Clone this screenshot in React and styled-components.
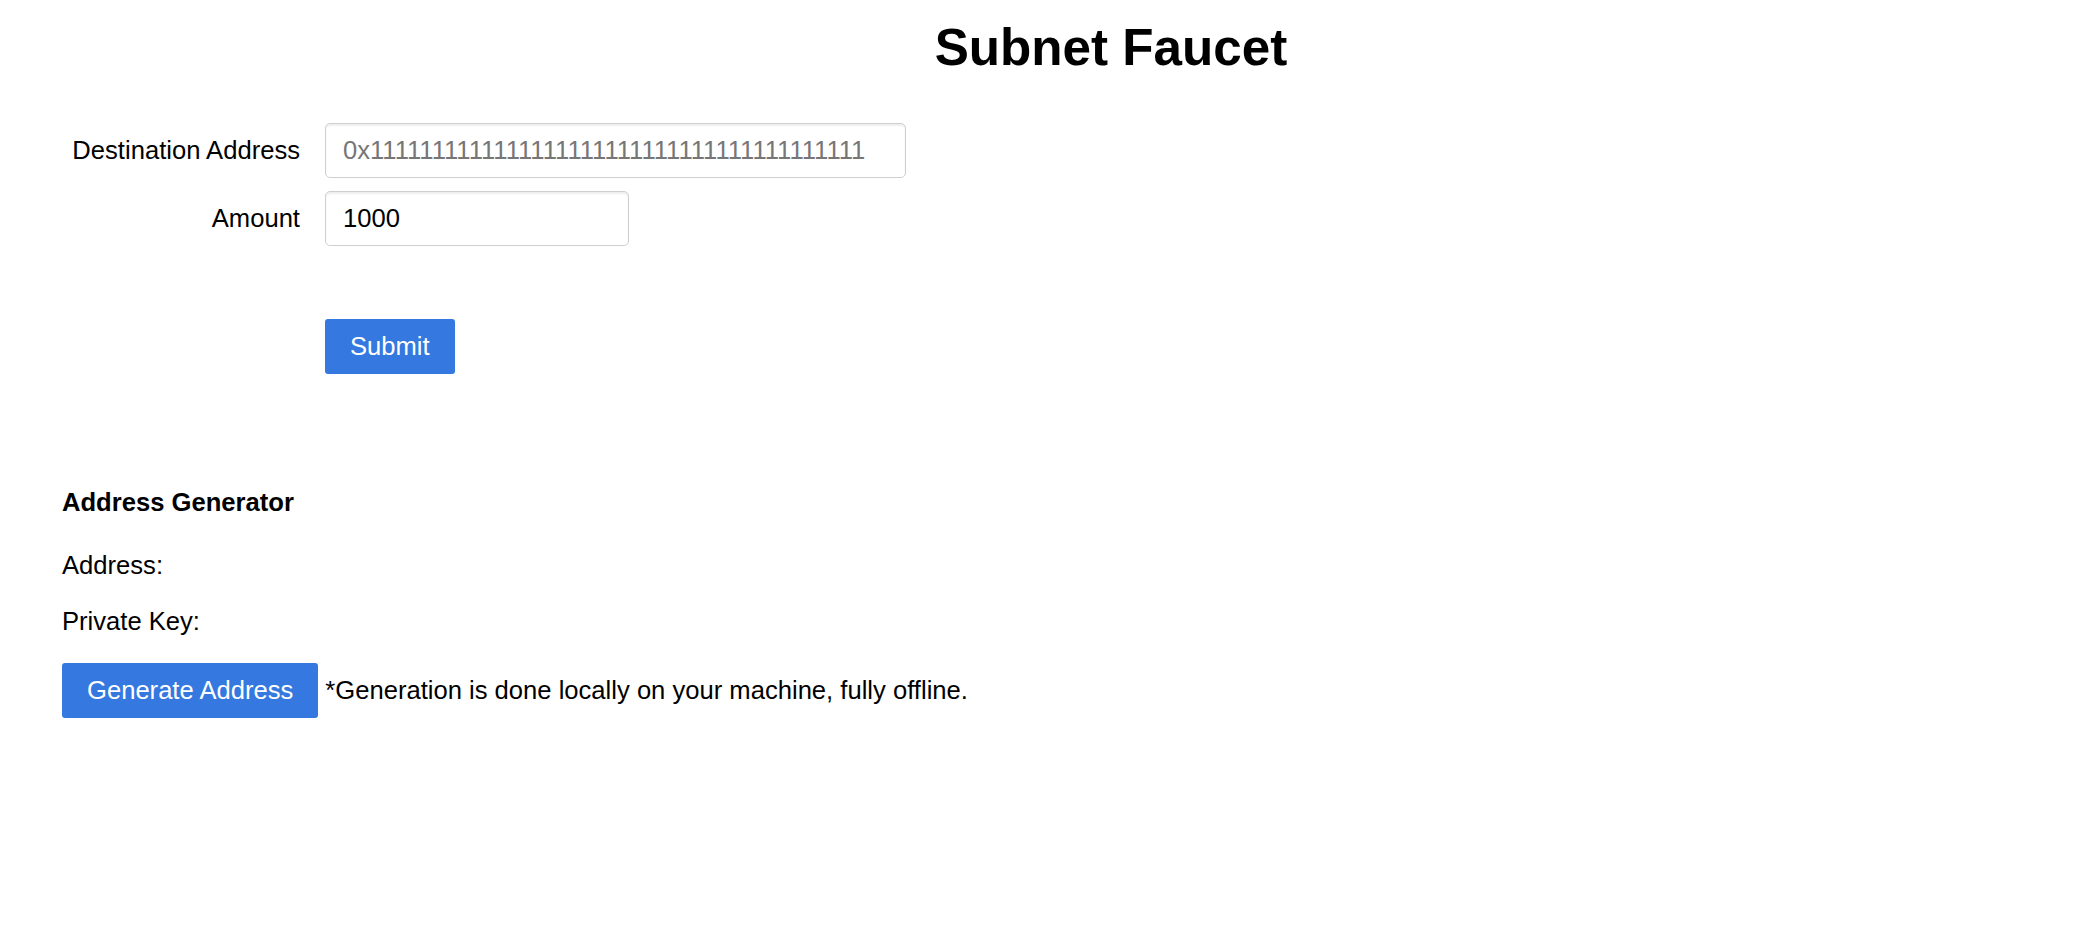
import React, { useState } from 'react';
import styled, { createGlobalStyle } from 'styled-components';

// Base page styles
const GlobalStyle = createGlobalStyle`
  body {
    margin: 0;
    background: #ffffff;
    color: #000000;
    font-family: "Liberation Sans", Arial, Helvetica, sans-serif;
    font-size: 25.6px;
  }
`;

// Page wrapper
const Page = styled.main`
  padding: 0 62px 60px 62px;
`;

// Big centered title
const Title = styled.h1`
  margin: 0;
  padding: 19px 0 0 122px;
  font-size: 51.2px;
  font-weight: 700;
  line-height: 1.15;
  text-align: center;
`;

// Label / field grid for the faucet form
const FormGrid = styled.form`
  display: grid;
  grid-template-columns: 238px auto;
  column-gap: 25px;
  row-gap: 13px;
  align-items: center;
  justify-items: start;
  margin-top: 45px;
`;

const FieldLabel = styled.label`
  justify-self: end;
  font-size: 25.6px;
  line-height: 1.15;
`;

const TextInput = styled.input`
  box-sizing: border-box;
  width: ${props => props.$width}px;
  height: 55px;
  padding: 0 17px;
  border: 1px solid #cfcfcf;
  border-radius: 5px;
  box-shadow: inset 0 2px 2px rgba(0, 0, 0, 0.07);
  font-family: "Liberation Sans", Arial, Helvetica, sans-serif;
  font-size: 25.6px;
  color: #000;
  outline: none;

  &::placeholder {
    color: #767676;
  }
`;

// Empty cell used to keep the button aligned with inputs
const Spacer = styled.div``;

const BlueButton = styled.button`
  box-sizing: border-box;
  height: 55px;
  padding: 0 25px;
  border: none;
  border-radius: 3px;
  background-color: #3478e0;
  color: #ffffff;
  font-family: "Liberation Sans", Arial, Helvetica, sans-serif;
  font-size: 25.6px;
  cursor: pointer;
  margin-top: ${props => props.$top || 0}px;
`;

// Address generator section
const Generator = styled.section`
  margin-top: 114px;
`;

const SectionTitle = styled.h3`
  margin: 0;
  font-size: 25.6px;
  font-weight: 700;
  line-height: 1.15;
`;

const InfoLine = styled.p`
  margin: ${props => props.$top}px 0 0 0;
  font-size: 25.6px;
  line-height: 1.15;
`;

const ButtonRow = styled.div`
  display: flex;
  align-items: center;
  gap: 7px;
  margin-top: 27px;
`;

const Note = styled.span`
  font-size: 25.6px;
  line-height: 1.15;
`;

const App = () => {
  const [destination, setDestination] = useState('');
  const [amount, setAmount] = useState('1000');

  return (
    <>
      <GlobalStyle />
      <Page>
        <Title>Subnet Faucet</Title>

        <FormGrid onSubmit={e => e.preventDefault()}>
          <FieldLabel htmlFor="dest">Destination Address</FieldLabel>
          <TextInput
            id="dest"
            $width={581}
            placeholder="0x1111111111111111111111111111111111111111"
            value={destination}
            onChange={e => setDestination(e.target.value)}
          />

          <FieldLabel htmlFor="amount">Amount</FieldLabel>
          <TextInput
            id="amount"
            $width={304}
            value={amount}
            onChange={e => setAmount(e.target.value)}
          />

          <Spacer />
          <BlueButton type="submit" $top={60}>Submit</BlueButton>
        </FormGrid>

        <Generator>
          <SectionTitle>Address Generator</SectionTitle>
          <InfoLine $top={34}>Address:</InfoLine>
          <InfoLine $top={26}>Private Key:</InfoLine>
          <ButtonRow>
            <BlueButton type="button">Generate Address</BlueButton>
            <Note>*Generation is done locally on your machine, fully offline.</Note>
          </ButtonRow>
        </Generator>
      </Page>
    </>
  );
};

export default App;
